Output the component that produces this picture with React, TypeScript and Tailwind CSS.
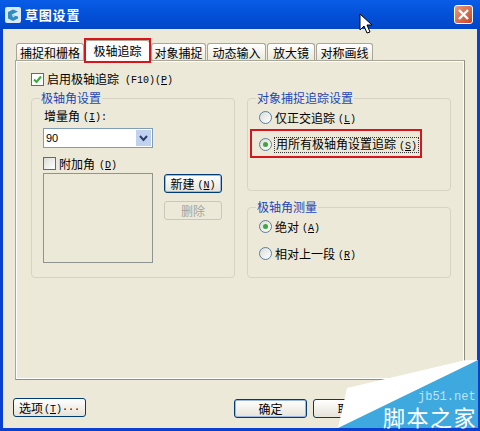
import React from "react";

const font = { fontFamily: '"Noto Sans CJK SC", "Liberation Sans", sans-serif' };

function M({ children }: { children: React.ReactNode }) {
  return <span className="font-['Liberation_Mono',monospace] text-[10px] tracking-[0px]">{children}</span>;
}
function Key({ k }: { k: string }) {
  return (
    <M>
      {"("}
      <u>{k}</u>
      {")"}
    </M>
  );
}

function Radio({ on }: { on?: boolean }) {
  return (
    <span className="w-[13px] h-[13px] rounded-full border border-[#5d7e9c] bg-gradient-to-br from-[#dcdcd6] to-white flex items-center justify-center shrink-0">
      {on && <span className="w-[5px] h-[5px] rounded-full bg-[#3fa63f]" />}
    </span>
  );
}

function Group({ title, className, children }: { title: string; className: string; children?: React.ReactNode }) {
  return (
    <div className={"relative border border-[#d6d3c4] rounded-[4px] " + className}>
      <span className="absolute left-[8px] -top-[8px] bg-[#ece9d8] px-[1px] text-[12px] leading-[14px] text-[#1c47b8]">{title}</span>
      {children}
    </div>
  );
}

function Button({ children, cls, disabled, def }: { children: React.ReactNode; cls: string; disabled?: boolean; def?: boolean }) {
  return (
    <div
      className={
        "h-[19px] rounded-[3px] border flex items-center justify-center text-[12px] leading-none " +
        (disabled
          ? "border-[#c9c7ba] bg-[#ece9d8] text-[#a6a49a] "
          : "border-[#003c74] text-black bg-gradient-to-b from-white to-[#e6e3d8] ") +
        (def ? "shadow-[inset_0_0_0_1px_#9db8e0] " : "") +
        cls
      }
    >
      {children}
    </div>
  );
}

function Tab({ label, w, active }: { label: string; w: string; active?: boolean }) {
  return active ? (
    <div className={"relative h-[21px] -mb-[1px] z-10 bg-[#fcfcfa] border border-b-0 border-[#a9a698] rounded-t-[3px] flex items-start pt-[2px] justify-center text-[12px] leading-[15px] " + w}>
      {label}
      <span className="absolute -left-[2px] -right-[2px] -top-[3px] -bottom-[2px] border-[2px] border-[#d8141c]" />
    </div>
  ) : (
    <div className={"h-[17px] bg-gradient-to-b from-white to-[#ece9d8] border border-b-0 border-[#a9a698] rounded-t-[3px] flex items-center justify-center text-[12px] leading-[15px] " + w}>
      {label}
    </div>
  );
}

export default function App() {
  return (
    <div style={font} className="relative w-[480px] h-[431px] overflow-hidden bg-[#0a3fd0] flex flex-col text-black">
      {/* Title bar */}
      <div className="h-[29px] shrink-0 flex items-center pl-[5px] pr-[7px] bg-gradient-to-b from-[#0a5ce6] via-[#0350d8] to-[#0246c6]">
        <svg width="16" height="16" viewBox="0 0 16 16" className="shrink-0">
          <rect x="0" y="0" width="16" height="16" rx="2" fill="#dbe9f4" />
          <path d="M3 5 L8 2.5 L13 4.5 L8 7 L6.5 8 L13 9.5 L13 11.5 L8 14 L3 11.5 Z" fill="#2f8cc0" />
          <path d="M7 8 L10 9 L8 10.5 Z" fill="#dbe9f4" />
        </svg>
        <span className="ml-[4px] text-[13px] font-bold text-white tracking-[0.8px] leading-none">草图设置</span>
        <div className="ml-auto w-[19px] h-[19px] rounded-[3px] border border-white bg-gradient-to-br from-[#e99a7c] to-[#c8401c] flex items-center justify-center">
          <svg width="13" height="13" viewBox="0 0 13 13">
            <path d="M2 2 L11 11 M11 2 L2 11" stroke="#fff" strokeWidth="2.4" />
          </svg>
        </div>
      </div>

      {/* Dialog body */}
      <div className="flex-1 mx-[3px] mb-[3px] bg-[#ece9d8] pl-[12px] pt-[11px] flex flex-col">
        <div className="flex items-end pl-[1px] h-[20px] gap-[1px] relative z-10">
          <Tab label="捕捉和栅格" w="w-[68px]" />
          <Tab label="极轴追踪" w="w-[65px]" active />
          <Tab label="对象捕捉" w="w-[55px]" />
          <Tab label="动态输入" w="w-[59px]" />
          <Tab label="放大镜" w="w-[48px]" />
          <Tab label="对称画线" w="w-[57px]" />
        </div>

        {/* Panel */}
        <div className="w-[450px] h-[320px] shrink-0 border border-[#a9a698] border-r-[#8f8c80] border-b-[#8f8c80] bg-[#ece9d8] shadow-[inset_0_0_0_1px_#fff] pl-[15px] pt-[11px]">
          <div className="flex items-center h-[14px] text-[12px] leading-none">
            <span className="w-[13px] h-[13px] border border-[#4a6f8f] bg-white flex items-center justify-center shrink-0">
              <svg width="9" height="9" viewBox="0 0 9 9">
                <path d="M1 4.5 L3.5 7 L8 1.5" stroke="#3aa83a" strokeWidth="2" fill="none" />
              </svg>
            </span>
            <span className="ml-[3px]">启用极轴追踪</span>
            <span className="ml-[6px]">
              <M>(F10)</M>
              <Key k="P" />
            </span>
          </div>

          <div className="flex gap-[12px] mt-[12px]">
            <Group title="极轴角设置" className="w-[204px] h-[180px] pl-[11px] pt-[10px]">
              <div className="flex items-center h-[14px] text-[12px] leading-none ml-[1px]">
                <span>增量角</span>
                <span className="ml-[3px]">
                  <Key k="I" />
                  <M>:</M>
                </span>
              </div>
              <div className="mt-[5px] w-[110px] h-[20px] border border-[#7f9db9] bg-white flex items-center justify-between pl-[2px] pr-[1px]">
                <span className="font-['Liberation_Sans',sans-serif] text-[11px] leading-none">90</span>
                <span className="w-[15px] h-[16px] bg-[#c1d2ee] flex items-center justify-center">
                  <svg width="9" height="7" viewBox="0 0 9 7">
                    <path d="M1 1 L4.5 5 L8 1" stroke="#2c3f6e" strokeWidth="2" fill="none" />
                  </svg>
                </span>
              </div>
              <div className="mt-[9px] flex items-center h-[13px] text-[12px] leading-none">
                <span className="w-[13px] h-[13px] border border-[#4a6f8f] bg-gradient-to-br from-[#dcdcd6] to-white shrink-0" />
                <span className="ml-[3px]">附加角</span>
                <span className="ml-[4px]">
                  <Key k="D" />
                </span>
              </div>
              <div className="flex mt-[3px]">
                <div className="w-[110px] h-[90px] border border-[#8f9490]" />
                <div className="ml-[11px] mt-[1px] flex flex-col gap-[8px]">
                  <Button cls="w-[58px]" def>
                    新建<span className="ml-[3px]"><Key k="N" /></span>
                  </Button>
                  <Button cls="w-[58px]" disabled>
                    删除
                  </Button>
                </div>
              </div>
            </Group>

            <div className="flex flex-col gap-[16px]">
              <Group title="对象捕捉追踪设置" className="w-[204px] h-[93px] pl-[11px] pt-[12px]">
                <div className="flex items-center h-[13px] text-[12px] leading-none">
                  <Radio />
                  <span className="ml-[3px]">仅正交追踪</span>
                  <span className="ml-[3px]"><Key k="L" /></span>
                </div>
                <div className="relative flex items-center h-[13px] mt-[14px] text-[12px] leading-none">
                  <Radio on />
                  <span className="ml-[2px] px-[1px] border border-dotted border-[#333]">
                    用所有极轴角设置追踪
                    <span className="ml-[3px]"><Key k="S" /></span>
                  </span>
                  <span className="absolute -left-[9px] -top-[9px] w-[172px] h-[29px] border-[2px] border-[#d8141c]" />
                </div>
              </Group>
              <Group title="极轴角测量" className="w-[204px] h-[71px] pl-[11px] pt-[12px]">
                <div className="flex items-center h-[13px] text-[12px] leading-none">
                  <Radio on />
                  <span className="ml-[3px]">绝对</span>
                  <span className="ml-[3px]"><Key k="A" /></span>
                </div>
                <div className="flex items-center h-[13px] mt-[14px] text-[12px] leading-none">
                  <Radio />
                  <span className="ml-[3px]">相对上一段</span>
                  <span className="ml-[3px]"><Key k="R" /></span>
                </div>
              </Group>
            </div>
          </div>
        </div>

        {/* Footer buttons */}
        <div className="flex items-start mt-[18px] -ml-[2px]">
          <Button cls="w-[73px]">
            选项<span className="ml-[1px]"><Key k="T" /></span>
            <M>...</M>
          </Button>
          <Button cls="w-[73px] ml-[148px] mt-[1px]" def>确定</Button>
          <Button cls="w-[73px] ml-[6px] mt-[1px]">取消</Button>
        </div>
      </div>

      {/* Mouse cursor */}
      <svg width="14" height="22" viewBox="0 0 14 22" className="absolute left-[359px] top-[13px]">
        <path d="M1 1 L1 17 L5 13 L8 20 L11 19 L8 12 L13 12 Z" fill="#fff" stroke="#000" strokeWidth="1" />
      </svg>

      {/* Watermark */}
      <svg width="142" height="70" viewBox="0 0 142 70" className="absolute left-[338px] top-[358px]">
        <polygon points="0,70 9,30 128,2 140,2 140,70" fill="#fff" />
        <polygon points="0,70 140,2 140,70" fill="#3da9de" />
      </svg>
      <div className="absolute left-[418px] top-[391px] text-[12px] leading-[12px] text-[#bfe3f5] font-['Liberation_Mono',monospace]">jb51.net</div>
      <div className="absolute left-[383px] top-[405px] text-[22px] tracking-[1.5px] leading-[22px] whitespace-nowrap text-white">脚本之家</div>
    </div>
  );
}
